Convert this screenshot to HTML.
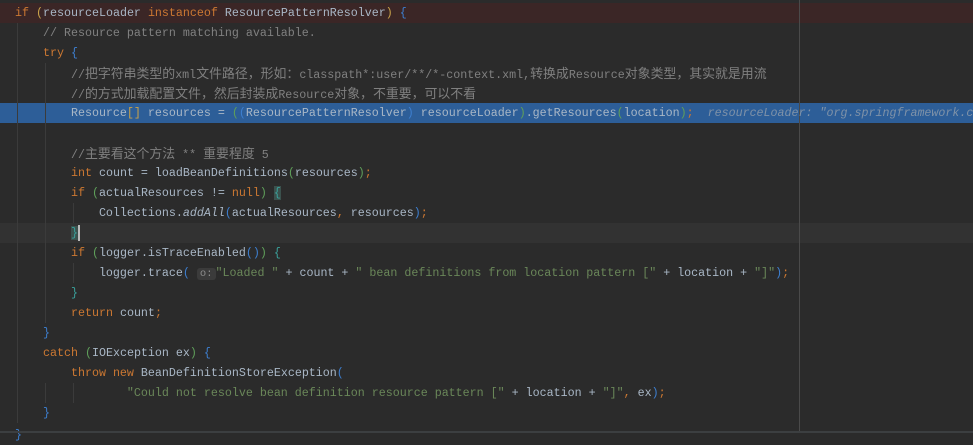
<!DOCTYPE html><html><head><meta charset="utf-8"><style>
body{margin:0;width:973px;height:433px;background:#2b2b2b;overflow:hidden;position:relative;font-family:"Liberation Mono",monospace;font-size:11.67px;color:#a9b7c6}
.l{position:absolute;left:0;width:973px;height:20px;line-height:20px;white-space:pre;padding-left:15px;box-sizing:border-box}
.g{position:absolute;width:1px;background:#3b3b3b}
.k{color:#cc7832}.c{color:#808080}.s{color:#6a8759}.i{font-style:italic}
.cj{font-family:"Noto Sans CJK SC",sans-serif;font-size:12.9px}
.y{color:#c9a24a}.gr{color:#5f9f5a}.b{color:#3d7fd0}.t{color:#3aa09a}
.h{font-style:italic;color:#7f92a8}
.hint{background:#3b3b3b;color:#8c8c8c;border-radius:3px;padding:0 3px;font-size:10.5px}
</style></head><body>
<div style="position:absolute;left:0;top:3px;width:973px;height:20px;background:#3b2626"></div>
<div style="position:absolute;left:0;top:103px;width:973px;height:20px;background:#2d5e98"></div>
<div style="position:absolute;left:0;top:223px;width:973px;height:20px;background:#323232"></div>
<div style="position:absolute;left:799px;top:0;width:1px;height:433px;background:#4a4a4a"></div>
<div class="g" style="left:17px;top:23px;height:400px"></div>
<div class="g" style="left:45px;top:63px;height:260px"></div>
<div class="g" style="left:45px;top:383px;height:20px"></div>
<div class="g" style="left:73px;top:203px;height:20px"></div>
<div class="g" style="left:73px;top:263px;height:20px"></div>
<div class="g" style="left:73px;top:383px;height:20px"></div>
<div class="l" style="top:3px"><span class="k">if</span> <span class="y">(</span>resourceLoader <span class="k">instanceof</span> ResourcePatternResolver<span class="y">)</span> <span class="b">{</span></div>
<div class="l" style="top:23px">    <span class="c">// Resource pattern matching available.</span></div>
<div class="l" style="top:43px">    <span class="k">try</span> <span class="b">{</span></div>
<div class="l c" style="top:63px">        //<span class="cj">把字符串类型的</span>xml<span class="cj">文件路径，形如：</span>classpath*:user/**/*-context.xml,<span class="cj">转换成</span>Resource<span class="cj">对象类型，其实就是用流</span></div>
<div class="l c" style="top:83px">        //<span class="cj">的方式加载配置文件，然后封装成</span>Resource<span class="cj">对象，不重要，可以不看</span></div>
<div class="l" style="top:103px">        Resource<span class="y">[]</span> resources = <span class="gr">(</span><span class="b">(</span>ResourcePatternResolver<span class="b">)</span> resourceLoader<span class="gr">)</span>.getResources<span class="gr">(</span>location<span class="gr">)</span><span class="k">;</span>  <span class="h">resourceLoader: "org.springframework.c</span></div>
<div class="l c" style="top:143px">        //<span class="cj">主要看这个方法</span> ** <span class="cj">重要程度</span> 5</div>
<div class="l" style="top:163px">        <span class="k">int</span> count = loadBeanDefinitions<span class="gr">(</span>resources<span class="gr">)</span><span class="k">;</span></div>
<div class="l" style="top:183px">        <span class="k">if</span> <span class="gr">(</span>actualResources != <span class="k">null</span><span class="gr">)</span> <span class="t" style="background:#3b514d">{</span></div>
<div class="l" style="top:203px">            Collections.<span class="i">addAll</span><span class="b">(</span>actualResources<span class="k">,</span> resources<span class="b">)</span><span class="k">;</span></div>
<div class="l" style="top:223px">        <span class="t" style="background:#3b514d">}</span><span style="display:inline-block;width:2px;height:16px;background:#bbb;vertical-align:middle"></span></div>
<div class="l" style="top:243px">        <span class="k">if</span> <span class="gr">(</span>logger.isTraceEnabled<span class="b">()</span><span class="gr">)</span> <span class="t">{</span></div>
<div class="l" style="top:263px">            logger.trace<span class="b">(</span> <span class="hint">o:</span><span class="s">"Loaded "</span> + count + <span class="s">" bean definitions from location pattern ["</span> + location + <span class="s">"]"</span><span class="b">)</span><span class="k">;</span></div>
<div class="l" style="top:283px">        <span class="t">}</span></div>
<div class="l" style="top:303px">        <span class="k">return</span> count<span class="k">;</span></div>
<div class="l" style="top:323px">    <span class="b">}</span></div>
<div class="l" style="top:343px">    <span class="k">catch</span> <span class="gr">(</span>IOException ex<span class="gr">)</span> <span class="b">{</span></div>
<div class="l" style="top:363px">        <span class="k">throw new</span> BeanDefinitionStoreException<span class="b">(</span></div>
<div class="l" style="top:383px">                <span class="s">"Could not resolve bean definition resource pattern ["</span> + location + <span class="s">"]"</span><span class="k">,</span> ex<span class="b">)</span><span class="k">;</span></div>
<div class="l" style="top:403px">    <span class="b">}</span></div>
<div class="l" style="top:425px"><span class="b">}</span></div>
<div style="position:absolute;left:0;top:431px;width:973px;height:2px;background:#3c3f41"></div>
</body></html>
